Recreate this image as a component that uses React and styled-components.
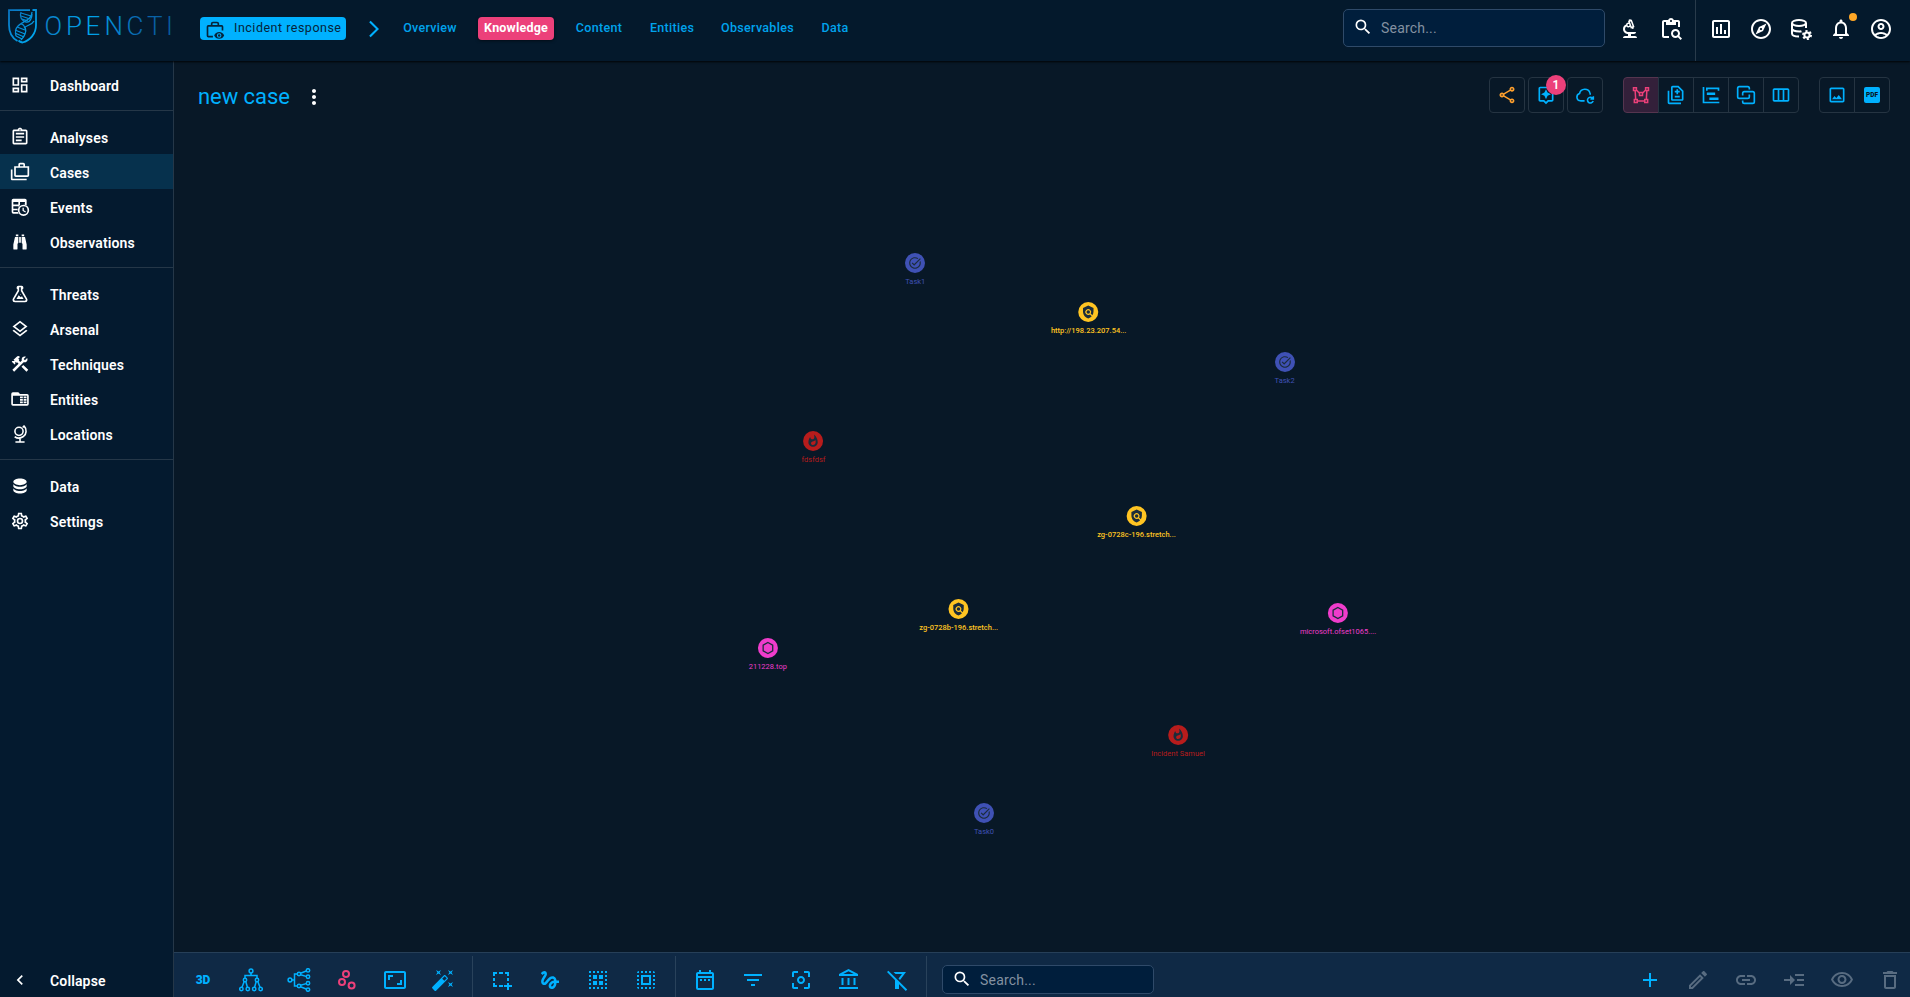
import React from 'react';
import styled, { createGlobalStyle, css } from 'styled-components';
import {
  MdOutlineDashboard, MdOutlineAssignment, MdOutlineCases, MdOutlineLayers, MdOutlineConstruction,
  MdChevronLeft, MdArrowForwardIos, MdSearch, MdOutlineBiotech, MdContentPasteSearch, MdOutlineInsertChart,
  MdOutlineExplore, MdNotificationsNone, MdOutlineAccountCircle, MdOutlineShare, MdOutlineAssistant,
  MdOutlineDifference, MdOutlineViewWeek, MdOutlineImage, MdAspectRatio, MdGesture, MdSelectAll,
  MdOutlineDateRange, MdFilterList, MdCenterFocusWeak, MdOutlineAccountBalance, MdAdd, MdOutlineEdit,
  MdLink, MdOutlineVisibility, MdDeleteOutline, MdTaskAlt, MdPolicy, MdWhatshot, MdMoreVert,
} from 'react-icons/md';

const blue = '#00b1ff';
const pink = '#ec407a';
const line = 'rgba(255, 255, 255, 0.15)';

const Global = createGlobalStyle`
  * { box-sizing: border-box; }
  body { margin: 0; background: #081827; font-family: Roboto, "Noto Sans", sans-serif; overflow: hidden; }
  svg { display: block; flex: none; }
`;

/* ---------- custom icons ---------- */

const Svg = ({ size = 20, children, ...rest }) => (
  <svg width={size} height={size} viewBox="0 0 24 24" fill="currentColor" {...rest}>{children}</svg>
);
const Stroked = ({ width = 2, ...rest }) => (
  <Svg {...rest} fill="none" stroke="currentColor" strokeWidth={width} />
);

const TableClock = () => (
  <Svg>
    <path fillRule="evenodd" d="M4 2H18A2 2 0 0 1 20 4V10.200A7 7 0 0 0 17.500 9.200L18 6H12V9.500A7 7 0 0 0 9.200 14V17.500L10.500 20H4A2 2 0 0 1 2 18V4A2 2 0 0 1 4 2M4 6V9H10V6H4M4 11V14H9.200L10 11H4M4 16V18H9.500L9 16Z" />
    <circle cx="16.200" cy="16" r="5.800" fill="none" stroke="currentColor" strokeWidth="2" />
    <path d="M15 12.800h1.600v3l2.500 1.500-.8 1.300-3.300-2z" />
  </Svg>
);
const Binoculars = () => (
  <Svg><path d="M11,6H13V13H11V6M9,20A1,1 0 0,1 8,21H5A1,1 0 0,1 4,20V15L6,6H10V13A1,1 0 0,1 9,14V20M10,5H7V3H10V5M15,20V14A1,1 0 0,1 14,13V6H18L20,15V20A1,1 0 0,1 19,21H16A1,1 0 0,1 15,20M14,5V3H17V5H14Z" /></Svg>
);
const Flask = () => (
  <Svg><path d="M5,19A1,1 0 0,0 6,20H18A1,1 0 0,0 19,19C19,18.79 18.93,18.59 18.82,18.43L13,8.35V4H11V8.35L5.18,18.43C5.07,18.59 5,18.79 5,19M6,22A3,3 0 0,1 3,19C3,18.4 3.18,17.84 3.5,17.37L9,7.81V6A1,1 0 0,1 8,5V4A2,2 0 0,1 10,2H14A2,2 0 0,1 16,4V5A1,1 0 0,1 15,6V7.81L20.5,17.37C20.82,17.84 21,18.4 21,19A3,3 0 0,1 18,22H6M13,16L14.34,14.66L16.27,18H7.73L10.39,13.39L13,16M12.5,12A0.5,0.5 0 0,1 13,12.5A0.5,0.5 0 0,1 12.5,13A0.5,0.5 0 0,1 12,12.5A0.5,0.5 0 0,1 12.5,12Z" /></Svg>
);
const FolderTable = () => (
  <Svg>
    <path fillRule="evenodd" d="M3.500 4H10L12 6H20.500A2 2 0 0 1 22.500 8V18A2 2 0 0 1 20.500 20H3.500A2 2 0 0 1 1.500 18V6A2 2 0 0 1 3.500 4M3.500 8V18H20.500V8Z" />
    <path d="M12 9h3.400v2.200H12zM16.400 9h3.400v2.200h-3.400zM12 12h3.400v2.200H12zM16.400 12h3.400v2.200h-3.400zM12 15h3.400v2.200H12zM16.400 15h3.400v2.200h-3.400z" />
  </Svg>
);
const GlobeModel = () => (
  <Stroked width={1.9}>
    <circle cx="10.800" cy="8.800" r="4.900" />
    <path d="M16.800 2.200C20.500 6 20 12.500 16 15 12.500 17.500 8.500 17.200 5.600 15.300M15.200 4.200 17.400 2M12 17V21.500M6.500 21.600h11" />
  </Stroked>
);
const Database = () => (
  <Svg><path d="M12,3C7.58,3 4,4.79 4,7C4,9.21 7.58,11 12,11C16.42,11 20,9.21 20,7C20,4.79 16.42,3 12,3M4,9V12C4,14.21 7.58,16 12,16C16.42,16 20,14.21 20,12V9C20,11.21 16.42,13 12,13C7.58,13 4,11.21 4,9M4,14V17C4,19.21 7.58,21 12,21C16.42,21 20,19.21 20,17V14C20,16.21 16.42,18 12,18C7.58,18 4,16.21 4,14Z" /></Svg>
);
const Cog = () => (
  <Svg><path d="M12,8A4,4 0 0,1 16,12A4,4 0 0,1 12,16A4,4 0 0,1 8,12A4,4 0 0,1 12,8M12,10A2,2 0 0,0 10,12A2,2 0 0,0 12,14A2,2 0 0,0 14,12A2,2 0 0,0 12,10M10,22C9.75,22 9.54,21.82 9.5,21.58L9.13,18.93C8.5,18.68 7.96,18.34 7.44,17.94L4.95,18.95C4.73,19.03 4.46,18.95 4.34,18.73L2.34,15.27C2.21,15.05 2.27,14.78 2.46,14.63L4.57,12.97L4.5,12L4.57,11L2.46,9.37C2.27,9.22 2.21,8.95 2.34,8.73L4.34,5.27C4.46,5.05 4.73,4.96 4.95,5.05L7.44,6.05C7.96,5.66 8.5,5.32 9.13,5.07L9.5,2.42C9.54,2.18 9.75,2 10,2H14C14.25,2 14.46,2.18 14.5,2.42L14.87,5.07C15.5,5.32 16.04,5.66 16.56,6.05L19.05,5.05C19.27,4.96 19.54,5.05 19.66,5.27L21.66,8.73C21.79,8.95 21.73,9.22 21.54,9.37L19.43,11L19.5,12L19.43,13L21.54,14.63C21.73,14.78 21.79,15.05 21.66,15.27L19.66,18.73C19.54,18.95 19.27,19.04 19.05,18.95L16.56,17.95C16.04,18.34 15.5,18.68 14.87,18.93L14.5,21.58C14.46,21.82 14.25,22 14,22H10M11.25,4L10.88,6.61C9.68,6.86 8.62,7.5 7.85,8.39L5.44,7.35L4.69,8.65L6.8,10.2C6.4,11.37 6.4,12.64 6.8,13.8L4.68,15.36L5.43,16.66L7.86,15.62C8.63,16.5 9.68,17.14 10.87,17.38L11.24,20H12.76L13.13,17.39C14.32,17.14 15.37,16.5 16.14,15.62L18.57,16.66L19.32,15.36L17.2,13.81C17.6,12.64 17.6,11.37 17.2,10.2L19.31,8.65L18.56,7.35L16.15,8.39C15.38,7.5 14.32,6.86 13.12,6.62L12.75,4H11.25Z" /></Svg>
);
const BriefcaseEye = () => (
  <Svg size={20}>
    <path fill="none" stroke="currentColor" strokeWidth="2" d="M9.500 20H4a1 1 0 0 1-1-1V8a1 1 0 0 1 1-1h16a1 1 0 0 1 1 1v4.500M8 7V4.500A1.500 1.500 0 0 1 9.500 3h5A1.500 1.500 0 0 1 16 4.500V7" />
    <path fillRule="evenodd" d="M17 14.500c-2.800 0-5 1.600-6 4 1 2.400 3.200 4 6 4s5-1.600 6-4c-1-2.400-3.200-4-6-4m0 6.700a2.700 2.700 0 1 1 0-5.400 2.700 2.700 0 0 1 0 5.400m0-4.200a1.500 1.500 0 1 0 0 3 1.500 1.500 0 0 0 0-3" />
  </Svg>
);
const DatabaseCog = () => (
  <Svg size={24}>
    <g fill="none" stroke="currentColor" strokeWidth="2">
      <ellipse cx="10" cy="6" rx="7" ry="3" />
      <path d="M3 6v10.500c0 1.700 3 3 7 3M17 6v5M3 11.500c0 1.700 3.300 3 7.500 3 .8 0 1.500 0 2-.2" />
      <circle cx="18" cy="18" r="2.600" />
      <circle cx="18" cy="18" r="4" strokeDasharray="2.100 2.088" />
    </g>
  </Svg>
);
const CloudRefresh = () => (
  <Stroked width={1.9}>
    <path d="M11.500 19H6.500A4.500 4.500 0 0 1 5.500 10.200 6.500 6.500 0 0 1 18 9.500c.3.800.3 1.500.3 2.200" />
    <path d="M21 15.700a3.500 3.500 0 1 0 .8 3.600M22 13.500v3.200h-3.500" />
  </Stroked>
);
const VectorPolygon = () => (
  <Stroked width={1.8}>
    <path d="M3 3.200h3.500v3.500H3zM17.500 3.200H21v3.500h-3.500zM10.200 9h3.600v3.600h-3.600zM4 17.500h3.500V21H4zM16.500 17.500H20V21h-3.500zM5 7l.6 10.300M19 7l-.6 10.300M7.800 19.200h8.500M6.500 6l3.700 4M17.500 6l-3.700 4" />
  </Stroked>
);
const Timeline = () => (
  <Svg><path d="M2 2.500h2V20h18v2H2zM6 3h16v4h-2V5H8v2H6zM7 9h10v3H7zM10 15h11v3H10z" /></Svg>
);
const Combine = () => (
  <Stroked width={2}>
    <path d="M16 5.500V4a2 2 0 0 0-2-2H4a2 2 0 0 0-2 2v10a2 2 0 0 0 2 2h10a2 2 0 0 0 2-2v-2.500" />
    <path d="M8 18.500V20a2 2 0 0 0 2 2h10a2 2 0 0 0 2-2V10a2 2 0 0 0-2-2H10a2 2 0 0 0-2 2v2.500" />
  </Stroked>
);
const Hexagon = ({ size }) => (
  <Stroked size={size} width={2.2}><path d="M12 2.500 20.200 7.200v9.600L12 21.500l-8.200-4.700V7.200z" /></Stroked>
);
const TreeVertical = ({ turned }) => (
  <svg width="24" height="24" viewBox="0 0 24 24" fill="none" stroke="currentColor" strokeWidth="1.5">
    <g transform={turned ? 'rotate(-90 12 12)' : undefined}>
      <circle cx="12" cy="3" r="1.900" />
      <circle cx="6" cy="12" r="1.700" />
      <circle cx="18" cy="12" r="1.700" />
      {[2.4, 8.8, 15.2, 21.6].map((x) => <circle key={x} cx={x} cy="21" r="1.700" />)}
      <path d="M12 5v2.500M6 10.200V7.500h12v2.700M5.200 13.500l-2.200 5.700M6.800 13.500l1.600 5.700M17.200 13.500l-1.600 5.700M18.800 13.500l2.200 5.700" />
    </g>
  </svg>
);
const Scatter = () => (
  <Stroked size={24} width={2}>
    <circle cx="11" cy="6" r="3" /><circle cx="7" cy="14" r="3" /><circle cx="16.600" cy="17.600" r="3" />
  </Stroked>
);
const Wand = () => (
  <Svg size={24}><path d="M7.5,5.6L5,7L6.4,4.5L5,2L7.5,3.4L10,2L8.6,4.5L10,7L7.5,5.6M19.5,15.4L22,14L20.6,16.5L22,19L19.5,17.6L17,19L18.4,16.5L17,14L19.5,15.4M22,2L20.6,4.5L22,7L19.5,5.6L17,7L18.4,4.5L17,2L19.5,3.4L22,2M13.34,12.78L15.78,10.34L13.66,8.22L11.22,10.66L13.34,12.78M14.37,7.29L16.71,9.63C17.1,10 17.1,10.65 16.71,11.04L5.04,22.71C4.65,23.1 4,23.1 3.63,22.71L1.29,20.37C0.9,20 0.9,19.35 1.29,18.96L12.96,7.29C13.35,6.9 14,6.9 14.37,7.29Z" /></Svg>
);
const SelectionAdd = () => (
  <Svg size={24}><path d="M3 4h4v2H5v2H3zM9 4h4v2H9zM15 4h4v4h-2V6h-2zM3 10h2v3H3zM17 10h2v3h-2zM3 15h2v2h2v2H3zM9 17h4v2H9zM17 15h2v2h3v2h-3v3h-2v-3h-3v-2h3z" /></Svg>
);
const dots = [3, 7, 11, 15, 19];
const SelectGroup = () => (
  <Svg size={24}>
    {dots.map((d) => (
      <React.Fragment key={d}>
        <rect x={d} y="3" width="2" height="2" /><rect x={d} y="19" width="2" height="2" />
        <rect x="3" y={d} width="2" height="2" /><rect x="19" y={d} width="2" height="2" />
      </React.Fragment>
    ))}
    <path d="M7 7h4v4H7zM13 7h4v4h-4zM7 13h4v4H7zM13 13h4v4h-4z" />
  </Svg>
);
const FilterOff = () => (
  <Svg size={24}>
    <path d="M3.400 2.700 22.200 21.500 20.800 22.900 2 4.100zM8.500 4H21l-6 8-1.500-1.500L17 6h-6.500zM10 12l4 4v5h-4z" />
  </Svg>
);
const Merge = () => (
  <Svg size={24}><path d="M2 11h6V7l5 5-5 5v-4H2zM13 6h9v2h-9zM15 11h7v2h-7zM13 16h9v2h-9z" /></Svg>
);

/* ---------- layout ---------- */

const Page = styled.div`
  width: 1910px;
  height: 997px;
  display: flex;
  flex-direction: column;
  color: #fff;
  overflow: hidden;
`;
const Header = styled.header`
  height: 61px;
  flex: none;
  display: flex;
  background: #04192c;
  box-shadow: 0 1px 2px rgba(0, 0, 0, 0.9);
  z-index: 1;
`;
const LogoBox = styled.div`
  width: 200px;
  padding: 8px 0 0 7px;
`;
const TypeBadge = styled.div`
  width: 146px;
  height: 23px;
  margin-top: 17px;
  padding: 0 0 2px 5px;
  display: flex;
  align-items: center;
  gap: 9px;
  border-radius: 4px;
  background: ${blue};
  color: #06243a;
  font-size: 12.5px;
  letter-spacing: 0.5px;
  white-space: nowrap;
  svg { margin-top: 4px; }
`;
const Crumb = styled.div`
  width: 51px;
  margin-left: 4px;
  margin-right: 1px;
  padding: 19px 0 0 14px;
  color: ${blue};
`;
const Tabs = styled.nav`
  display: flex;
  height: 23px;
  margin-top: 17px;
`;
const Tab = styled.div`
  width: ${(p) => p.$width}px;
  margin-right: ${(p) => p.$gap}px;
  padding-bottom: 2px;
  display: flex;
  align-items: center;
  justify-content: center;
  border-radius: 4px;
  font-size: 12.5px;
  font-weight: 500;
  letter-spacing: ${(p) => p.$spacing ?? 0.3}px;
  color: #00a3ec;
  ${(p) => p.$active && css`
    background: ${pink};
    color: #fff;
    font-weight: 700;
    box-shadow: 0 1px 3px rgba(0, 0, 0, 0.5);
  `}
`;
const SearchField = styled.div`
  display: flex;
  align-items: center;
  flex: none;
  width: ${(p) => p.$width}px;
  height: ${(p) => p.$height}px;
  margin: ${(p) => p.$margin};
  padding-left: 9px;
  gap: 8px;
  border: 1px solid #2f4a69;
  border-radius: 5px;
  background: #001e3c;
  font-size: 14px;
  letter-spacing: 0.2px;
  color: #8391a1;
  svg { color: #fff; margin-bottom: 2px; }
`;
const HeaderIcons = styled.div`
  display: flex;
  align-items: center;
  height: 61px;
  margin-right: ${(p) => p.$right}px;
  padding: 0 0 3px 13px;
  gap: ${(p) => p.$gap}px;
  border-left: ${(p) => (p.$rule ? `1px solid ${line}` : 'none')};
`;
const Bell = styled.span`
  position: relative;
  &::after {
    content: '';
    position: absolute;
    right: -4px;
    top: -4px;
    width: 8px;
    height: 8px;
    border-radius: 50%;
    background: #ffa726;
  }
`;
const Body = styled.div`
  flex: 1;
  display: flex;
  min-height: 0;
`;
const Sidebar = styled.aside`
  width: 174px;
  flex: none;
  display: flex;
  flex-direction: column;
  padding-top: 6px;
  background: #041a2f;
  border-right: 1px solid #253748;
`;
const MenuGroup = styled.div`
  margin-bottom: 8px;
  & + & { border-top: 1px solid #253748; padding-top: 8px; }
`;
const MenuRow = styled.div`
  height: 35px;
  padding: 1px 0 0 10px;
  display: flex;
  align-items: center;
  gap: 20px;
  font-size: 14px;
  font-weight: 600;
  letter-spacing: 0.15px;
  background: ${(p) => (p.$selected ? '#06314d' : 'transparent')};
  margin-top: ${(p) => (p.$bottom ? 'auto' : 0)};
`;
const MenuLabel = styled.span`padding-top: 1px;`;
const Main = styled.main`
  flex: 1;
  display: flex;
  flex-direction: column;
  background: #081827;
`;
const TitleBar = styled.div`
  height: 70px;
  padding: 16px 20px 0 24px;
  display: flex;
`;
const Title = styled.h1`
  margin: 0 12px 0 0;
  padding-top: 1px;
  line-height: 38px;
  font-size: 22px;
  font-weight: 400;
  letter-spacing: -0.05px;
  color: ${blue};
`;
const Kebab = styled.div`
  padding-top: 8px;
  margin-right: auto;
`;
const Actions = styled.div`
  display: flex;
  gap: ${(p) => p.$gap ?? 0}px;
  margin-left: 20px;
`;
const ActionButton = styled.div`
  position: relative;
  width: 36px;
  height: 36px;
  display: flex;
  align-items: center;
  justify-content: center;
  border: 1px solid #253442;
  border-radius: 4px;
  color: ${(p) => p.$color ?? blue};
  background: ${(p) => (p.$active ? '#33203a' : 'transparent')};
  ${(p) => p.$active && css`border-color: #55354f;`}
  ${(p) => p.$joined && css`
    border-radius: 0;
    margin-right: -1px;
    &:first-child { border-radius: 4px 0 0 4px; }
    &:last-child { border-radius: 0 4px 4px 0; margin-right: 0; }
  `}
`;
const Count = styled.span`
  position: absolute;
  top: -3px;
  right: -3px;
  width: 20px;
  height: 20px;
  line-height: 20px;
  border-radius: 50%;
  background: ${pink};
  color: #fff;
  font-size: 12px;
  font-weight: 600;
  text-align: center;
`;
const PdfBox = styled.span`
  width: 16px;
  height: 16px;
  line-height: 16px;
  border-radius: 2px;
  background: ${blue};
  color: #081827;
  font-size: 6.5px;
  font-weight: 900;
  text-align: center;
`;
const Canvas = styled.div`
  position: relative;
  flex: 1;
`;
const Node = styled.div`
  position: absolute;
  left: ${(p) => p.$x - 174}px;
  top: ${(p) => p.$y - 131}px;
  transform: translate(-50%, -10px);
  display: flex;
  flex-direction: column;
  align-items: center;
  gap: 4px;
  color: ${(p) => p.$color};
  font-size: 7.5px;
  line-height: 10px;
  font-weight: ${(p) => (p.$bold ? 500 : 400)};
  white-space: nowrap;
`;
const Disc = styled.span`
  width: 20px;
  height: 20px;
  display: flex;
  align-items: center;
  justify-content: center;
  border-radius: 50%;
  background: ${(p) => p.$color};
  color: #1b2c3b;
`;
const Toolbar = styled.footer`
  height: 45px;
  flex: none;
  display: flex;
  padding: 3px 0 0 5px;
  overflow: hidden;
  background: #0f2945;
  border-top: 1px solid #263f58;
`;
const Tool = styled.div`
  width: 48px;
  height: 48px;
  flex: none;
  display: flex;
  align-items: center;
  justify-content: center;
  color: ${(p) => p.$color ?? blue};
  font-size: 12px;
  font-weight: 900;
  &:last-child { margin-right: -4px; }
`;
const Divider = styled.span`
  width: 1px;
  height: 60px;
  margin: 0 5px;
  background: #29425b;
`;
const Spacer = styled.span`flex: 1;`;

const Logo = () => (
  <svg width="180" height="38" viewBox="0 0 180 38">
    <defs>
      <linearGradient id="mark" x1="0" y1="0" x2="1" y2="1">
        <stop offset="0" stopColor="#0a74c0" /><stop offset="1" stopColor="#00aef5" />
      </linearGradient>
      <linearGradient id="word" gradientUnits="userSpaceOnUse" x1="38" y1="0" x2="165" y2="0">
        <stop offset="0" stopColor="#0b80c8" /><stop offset="0.35" stopColor="#00a5ee" /><stop offset="0.75" stopColor="#0a66ac" /><stop offset="1" stopColor="#075b9c" />
      </linearGradient>
    </defs>
    <g fill="none" stroke="url(#mark)">
      <path strokeWidth="1.800" d="M23 2.100H2V17c0 8 4 13.500 8.500 16M25.500 2H29v15c0 9-6 15.500-13.500 17.500-1.500-.3-3-1-4-2" />
      <path strokeWidth="1.300" d="M14 4c-2 5 1 9 5 10s6-4 6-8M25 4c0 8-9 9-14 14-3 3-3 6-2 10M14 15c4 3 6 7 4 11-1 3-3 5-4 6M27 13c-2 4-7 4-10 7" />
      <path strokeWidth="1.200" d="M14 5l10 3M14 8l9 3M15 11l6 2M10 19l8 3M8 22l10 4M8 25l9 4M9 28l6 3" />
    </g>
    <text x="37.500 59 78.500 97.500 119.500 140 159" y="27" fill="url(#word)" fontFamily="Roboto" fontWeight="300" fontSize="26">OPENCTI</text>
  </svg>
);

const menu = [
  [['Dashboard', <MdOutlineDashboard size={20} />]],
  [
    ['Analyses', <MdOutlineAssignment size={20} />],
    ['Cases', <MdOutlineCases size={20} />],
    ['Events', <TableClock />],
    ['Observations', <Binoculars />],
  ],
  [
    ['Threats', <Flask />],
    ['Arsenal', <MdOutlineLayers size={20} />],
    ['Techniques', <MdOutlineConstruction size={20} />],
    ['Entities', <FolderTable />],
    ['Locations', <GlobeModel />],
  ],
  [['Data', <Database />], ['Settings', <Cog />]],
];

const kinds = {
  task: ['#3f51b5', MdTaskAlt],
  indicator: ['#ffc422', MdPolicy],
  incident: ['#b71c1c', MdWhatshot],
  domain: ['#f03ccb', Hexagon],
};
const nodes = [
  ['task', 915.3, 262.5, 'Task1'],
  ['indicator', 1088.7, 312, 'http://198.23.207.54...'],
  ['task', 1284.6, 362, 'Task2'],
  ['incident', 813.5, 441, 'fdsfdsf'],
  ['indicator', 1136.5, 516.3, 'zg-0728c-196.stretch...'],
  ['indicator', 958.7, 608.7, 'zg-0728b-196.stretch...'],
  ['domain', 767.8, 648, '211228.top'],
  ['domain', 1338, 613, 'microsoft.ofset1065....'],
  ['incident', 1178, 735.3, 'Incident Samuel'],
  ['task', 984, 813, 'Task0'],
];

const muted = '#586c81';

export default function App() {
  return (
    <Page>
      <Global />
      <Header>
        <LogoBox><Logo /></LogoBox>
        <TypeBadge><BriefcaseEye />Incident response</TypeBadge>
        <Crumb><MdArrowForwardIos size={20} /></Crumb>
        <Tabs>
          <Tab $width={56} $gap={20}>Overview</Tab>
          <Tab $width={76} $gap={20} $active $spacing={0.2}>Knowledge</Tab>
          <Tab $width={50} $gap={24}>Content</Tab>
          <Tab $width={48} $gap={23}>Entities</Tab>
          <Tab $width={77} $gap={23}>Observables</Tab>
          <Tab $width={32} $gap={0}>Data</Tab>
        </Tabs>
        <Spacer />
        <SearchField $width={262} $height={38} $margin="9px 0 0"><MdSearch size={20} />Search...</SearchField>
        <HeaderIcons $gap={17} $right={12}>
          <MdOutlineBiotech size={24} />
          <MdContentPasteSearch size={24} />
        </HeaderIcons>
        <HeaderIcons $rule $gap={16} $right={17}>
          <MdOutlineInsertChart size={24} />
          <MdOutlineExplore size={24} />
          <DatabaseCog />
          <Bell><MdNotificationsNone size={24} /></Bell>
          <MdOutlineAccountCircle size={24} />
        </HeaderIcons>
      </Header>
      <Body>
        <Sidebar>
          {menu.map((group, i) => (
            <MenuGroup key={i}>
              {group.map(([name, icon]) => (
                <MenuRow key={name} $selected={name === 'Cases'}>{icon}<MenuLabel>{name}</MenuLabel></MenuRow>
              ))}
            </MenuGroup>
          ))}
          <MenuRow $bottom><MdChevronLeft size={20} /><MenuLabel>Collapse</MenuLabel></MenuRow>
        </Sidebar>
        <Main>
          <TitleBar>
            <Title>new case</Title>
            <Kebab><MdMoreVert size={24} /></Kebab>
            <Actions $gap={3}>
              <ActionButton $color="#ffa02d"><MdOutlineShare size={20} /></ActionButton>
              <ActionButton><MdOutlineAssistant size={20} /><Count>1</Count></ActionButton>
              <ActionButton><CloudRefresh /></ActionButton>
            </Actions>
            <Actions>
              <ActionButton $joined $active $color={pink}><VectorPolygon /></ActionButton>
              <ActionButton $joined><MdOutlineDifference size={20} /></ActionButton>
              <ActionButton $joined><Timeline /></ActionButton>
              <ActionButton $joined><Combine /></ActionButton>
              <ActionButton $joined><MdOutlineViewWeek size={20} /></ActionButton>
            </Actions>
            <Actions>
              <ActionButton $joined><MdOutlineImage size={20} /></ActionButton>
              <ActionButton $joined><PdfBox>PDF</PdfBox></ActionButton>
            </Actions>
          </TitleBar>
          <Canvas>
            {nodes.map(([kind, x, y, label]) => {
              const [color, Icon] = kinds[kind];
              return (
                <Node key={label} $x={x} $y={y} $color={color} $bold={kind === 'indicator'}>
                  <Disc $color={color}><Icon size={14} /></Disc>
                  {label}
                </Node>
              );
            })}
          </Canvas>
          <Toolbar>
            <Tool>3D</Tool>
            <Tool><TreeVertical /></Tool>
            <Tool><TreeVertical turned /></Tool>
            <Tool $color={pink}><Scatter /></Tool>
            <Tool><MdAspectRatio size={24} /></Tool>
            <Tool><Wand /></Tool>
            <Divider />
            <Tool><SelectionAdd /></Tool>
            <Tool><MdGesture size={24} /></Tool>
            <Tool><SelectGroup /></Tool>
            <Tool><MdSelectAll size={24} /></Tool>
            <Divider />
            <Tool><MdOutlineDateRange size={24} /></Tool>
            <Tool><MdFilterList size={24} /></Tool>
            <Tool><MdCenterFocusWeak size={24} /></Tool>
            <Tool><MdOutlineAccountBalance size={24} /></Tool>
            <Tool><FilterOff /></Tool>
            <Divider />
            <SearchField $width={212} $height={29} $margin="9px 0 0 10px"><MdSearch size={20} />Search...</SearchField>
            <Spacer />
            <Tool><MdAdd size={24} /></Tool>
            <Tool $color={muted}><MdOutlineEdit size={24} /></Tool>
            <Tool $color={muted}><MdLink size={24} /></Tool>
            <Tool $color={muted}><Merge /></Tool>
            <Tool $color={muted}><MdOutlineVisibility size={24} /></Tool>
            <Tool $color={muted}><MdDeleteOutline size={24} /></Tool>
          </Toolbar>
        </Main>
      </Body>
    </Page>
  );
}
